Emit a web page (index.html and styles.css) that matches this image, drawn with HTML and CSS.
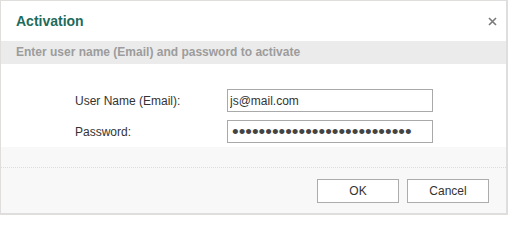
FILE: index.html
```html
<!DOCTYPE html>
<html>
<head>
<meta charset="utf-8">
<link rel="stylesheet" href="styles.css">
</head>
<body>
<div class="dialog">
  <div class="titlebar">
    <span class="title">Activation</span>
    <button class="close" aria-label="Close">
      <svg width="9" height="9" viewBox="0 0 9 9"><path d="M1 1L8 8M8 1L1 8" stroke="#7a7a7a" stroke-width="1.6" fill="none"/></svg>
    </button>
  </div>
  <div class="subtitle">Enter user name (Email) and password to activate</div>
  <div class="content">
    <div class="row">
      <label class="label">User Name (Email):</label>
      <input class="field" type="text" value="js@mail.com">
    </div>
    <div class="row">
      <label class="label">Password:</label>
      <input class="field pw" type="password" value="abcdefghijklmnopqrstuvwxyza">
    </div>
  </div>
  <div class="footer">
    <div class="buttons">
      <button class="btn">OK</button>
      <button class="btn">Cancel</button>
    </div>
  </div>
</div>
</body>
</html>
```
FILE: styles.css
```css
html, body {
  margin: 0;
  padding: 0;
  background: #ffffff;
}
.dialog {
  box-sizing: border-box;
  width: 508px;
  height: 215px;
  border-style: solid;
  border-color: #e0dddd;
  border-width: 1px 2px 2px 1px;
  display: flex;
  flex-direction: column;
  font-family: "Liberation Sans", Arial, sans-serif;
  font-size: 12px;
  color: #333333;
  background: #ffffff;
}
.titlebar {
  height: 40px;
  display: flex;
  align-items: center;
  justify-content: space-between;
  padding: 0 9px 0 15px;
}
.title {
  font-size: 14px;
  font-weight: bold;
  color: #1f6b5b;
}
.close {
  border: 0;
  background: transparent;
  padding: 0;
  width: 9px;
  height: 9px;
  display: flex;
}
.subtitle {
  height: 23px;
  line-height: 23px;
  background: #ebebeb;
  color: #9c9c9c;
  font-weight: bold;
  padding-left: 15px;
}
.content {
  height: 83px;
  box-sizing: border-box;
  padding: 25px 0 0 74px;
  display: flex;
  flex-direction: column;
  gap: 8px;
}
.row {
  display: flex;
  align-items: center;
}
.label {
  width: 152px;
}
.field {
  box-sizing: border-box;
  width: 206px;
  height: 23px;
  border: 1px solid #a9a9a9;
  padding: 0 2px;
  margin: 0;
  font-family: "Liberation Sans", Arial, sans-serif;
  font-size: 12px;
  color: #333333;
  outline: none;
}
.pw {
  font-size: 19px;
  color: #444444;
  padding-left: 4px;
}
.footer {
  flex: 1;
  background: #f8f8f8;
  padding-top: 20px;
}
.buttons {
  border-top: 1px dotted #dcdcdc;
  padding: 11px 17px 0 0;
  display: flex;
  justify-content: flex-end;
  gap: 8px;
}
.btn {
  box-sizing: border-box;
  width: 82px;
  height: 24px;
  background: #ffffff;
  border: 1px solid #acacac;
  font-family: "Liberation Sans", Arial, sans-serif;
  font-size: 12px;
  color: #333333;
  padding: 0;
}
```
